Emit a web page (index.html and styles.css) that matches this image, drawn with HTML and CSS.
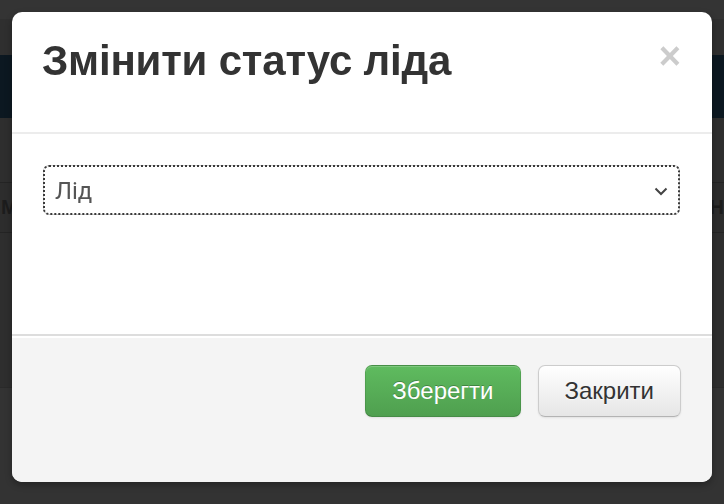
FILE: index.html
```html
<!DOCTYPE html>
<html lang="uk">
<head>
<meta charset="utf-8">
<title>Змінити статус ліда</title>
<link rel="stylesheet" href="styles.css">
</head>
<body>
<div class="page">
  <div class="band band-top"></div>
  <div class="band band-bar"></div>
  <div class="band band-nav"></div>
  <div class="band band-sub"></div>
  <div class="band band-head"><span class="frag">М</span><span class="frag">Н</span></div>
  <div class="band band-rows"></div>
  <div class="band band-bottom"></div>
</div>

<div class="modal">
  <div class="modal-header">
    <h3 class="modal-title">Змінити статус ліда</h3>
    <button class="close" type="button">×</button>
  </div>
  <div class="modal-body">
    <div class="select">
      <span class="select-value">Лід</span>
      <svg class="chevron" width="14" height="9" viewBox="0 0 14 9"><polyline points="1.5,1.5 7,7 12.5,1.5" fill="none" stroke="#444" stroke-width="2"/></svg>
    </div>
  </div>
  <div class="modal-footer">
    <button class="btn btn-success" type="button">Зберегти</button>
    <button class="btn" type="button">Закрити</button>
  </div>
</div>
</body>
</html>
```

FILE: styles.css
```css
html, body {
  margin: 0;
  padding: 0;
  background: #333333;
  font-family: "Liberation Sans", Arial, sans-serif;
}

.page {
  width: 724px;
  height: 504px;
  overflow: hidden;
  display: flex;
  flex-direction: column;
}

.band { flex: none; }
.band-top { height: 19px; background: #343434; }
.band-bar { height: 36px; background: #2f2f2f; }
.band-nav { height: 63px; background: #0c1821; }
.band-sub { height: 64px; background: #2e2e2e; border-bottom: 1px solid #242424; }
.band-head {
  height: 49px;
  background: #2d2d2d;
  border-bottom: 1px solid #242424;
  display: flex;
  justify-content: space-between;
  align-items: center;
  padding: 0 0 0 1px;
}
.frag {
  font-weight: bold;
  font-size: 20px;
  color: #1c1c1c;
}
.band-rows { height: 154px; background: #2e2e2e; border-bottom: 1px solid #2a2a2a; }
.band-bottom { flex: 1; background: #333333; }

.modal {
  position: fixed;
  left: 12px;
  top: 12px;
  width: 700px;
  height: 470px;
  background: #ffffff;
  border-radius: 10px;
  overflow: hidden;
  display: flex;
  flex-direction: column;
  box-shadow: 0 3px 7px rgba(0, 0, 0, 0.3);
}

.modal-header {
  height: 122px;
  box-sizing: border-box;
  padding: 28px 31px 0 30px;
  border-bottom: 2px solid #ececec;
  display: flex;
  justify-content: space-between;
  align-items: flex-start;
  flex: none;
}

.modal-title {
  margin: 0;
  font-family: "Liberation Sans", Arial, sans-serif;
  font-weight: bold;
  font-size: 42px;
  line-height: 42px;
  color: #333333;
  letter-spacing: -0.2px;
}

.close {
  border: 0;
  background: none;
  padding: 0;
  margin-top: -3px;
  font-family: "Liberation Sans", Arial, sans-serif;
  font-weight: bold;
  font-size: 38px;
  line-height: 38px;
  color: #cccccc;
  text-shadow: 0 1px 0 #ffffff;
  cursor: pointer;
}

.modal-body {
  height: 200px;
  box-sizing: border-box;
  padding: 31px 32px 0 31px;
  flex: none;
}

.select {
  height: 50px;
  box-sizing: border-box;
  border: 1px solid #cccccc;
  border-radius: 6px;
  outline: 2px dotted #3a3a3a;
  outline-offset: -2px;
  background: #ffffff;
  display: flex;
  align-items: center;
  justify-content: space-between;
  padding: 0 11px 0 11px;
}

.select-value {
  font-family: Roboto, "Noto Sans", sans-serif;
  font-size: 24px;
  color: #555555;
  margin-top: 2px;
}

.chevron { margin-top: 2px; }

.modal-footer {
  flex: 1;
  background: #f4f4f4;
  border-top: 2px solid #dddddd;
  box-shadow: inset 0 2px 0 #ffffff;
  padding: 29px 31px 0 0;
  display: flex;
  justify-content: flex-end;
  align-items: flex-start;
  gap: 17px;
}

.btn {
  height: 52px;
  box-sizing: border-box;
  padding: 0 26px;
  font-family: "Liberation Sans", Arial, sans-serif;
  font-size: 24px;
  line-height: 50px;
  color: #333333;
  text-shadow: 0 1px 1px rgba(255, 255, 255, 0.75);
  background: linear-gradient(to bottom, #ffffff, #e6e6e6);
  border: 1px solid #cccccc;
  border-bottom-color: #b3b3b3;
  border-radius: 7px;
  box-shadow: inset 0 1px 0 rgba(255, 255, 255, 0.2), 0 1px 2px rgba(0, 0, 0, 0.08);
  cursor: pointer;
}

.btn-success {
  color: #ffffff;
  text-shadow: 0 -1px 0 rgba(0, 0, 0, 0.25);
  background: linear-gradient(to bottom, #5fbb5f, #4f9f4f);
  border-color: rgba(0, 0, 0, 0.1) rgba(0, 0, 0, 0.1) rgba(0, 0, 0, 0.25);
}
```
